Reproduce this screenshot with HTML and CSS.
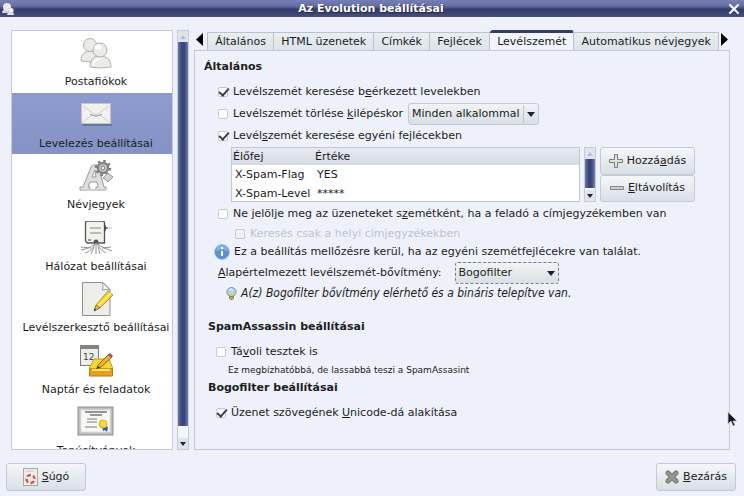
FILE: index.html
```html
<!DOCTYPE html>
<html lang="hu">
<head>
<meta charset="utf-8">
<title>Az Evolution beállításai</title>
<link rel="stylesheet" href="styles.css">
</head>
<body>
<div class="window">
  <header class="titlebar">
    <svg class="app-icon" width="13" height="13" viewBox="0 0 13 13"><path d="M1 11c0-3 2-4 4-4s5 1 5 4z" fill="#cfd2d6"/><circle cx="6" cy="5" r="4" fill="#e9e9ea"/><path d="M6 13c0-2 2-3 4-3s3 1 3 3z" fill="#dfe1e4"/><circle cx="10" cy="8.500" r="2.500" fill="#f3f3f3" stroke="#b9bbc2" stroke-width=".5"/></svg>
    <h1>Az Evolution beállításai</h1>
    <button class="close" aria-label="Ablak bezárása"><svg width="12" height="12" viewBox="0 0 12 12"><path d="M2 2l8 8M10 2l-8 8" stroke="#fff" stroke-width="2" stroke-linecap="round"/></svg></button>
  </header>

  <main class="content">
    <nav class="sidebar">
      <div class="list">
        <div class="items">
          <a href="#" class="item">
            <svg width="34" height="34" viewBox="0 0 34 34"><g fill="#ecebe8" stroke="#b2b0ac"><path d="M2 25c0-7 4-10 9-10s8 3 8 10q-8 2-17 0z"/><circle cx="11" cy="9" r="6.500"/><path d="M11 31c0-8 4-11 10-11s11 3 11 11q-10 2-21 0z"/><circle cx="21" cy="14" r="7"/></g><ellipse cx="19" cy="11" rx="3.500" ry="2.500" fill="#fff"/><path d="M14 29c1-4 3-6 7-6" stroke="#fff" stroke-width="2" fill="none"/></svg>
            <span>Postafiókok</span></a>
          <a href="#" class="item selected">
            <svg width="34" height="34" viewBox="0 0 34 34"><path d="M3 27h30" stroke="#6c779f" stroke-width="2"/><rect x="2.500" y="5.500" width="29" height="20" fill="#f1f1ef" stroke="#c2c3c4"/><path d="M3 25l10-8M31 25l-10-8" stroke="#cfcfcc" fill="none"/><path d="M4 8l11 8q2 1.500 4 0l11-8" stroke="#cbccc9" fill="none"/><path d="M11 16q6 4 12 0" stroke="#999b98" fill="none"/></svg>
            <span>Levelezés beállításai</span></a>
          <a href="#" class="item">
            <svg width="34" height="34" viewBox="0 0 34 34"><path d="M1 28h3l8-20q1-2 3-2h4l6 22h2v3H17v-3h2l-1-5h-7l-2 5h2v3H1zM13 18h4l-1-7z" fill="#dedede" stroke="#9a9a9a" fill-rule="evenodd"/><path d="M2 31h25" stroke="#ccc" stroke-width="2"/><circle cx="24" cy="9" r="5" fill="#d2d2d2" stroke="#858585" stroke-width="2.500"/><circle cx="24" cy="9" r="7" fill="none" stroke="#808080" stroke-width="2.500" stroke-dasharray="2.500 3"/><circle cx="24" cy="9" r="2" fill="#eee" stroke="#777"/><path d="M29 14l5 4-5 5-5-4z" fill="#d0d0d0" stroke="#9a9a9a"/></svg>
            <span>Névjegyek</span></a>
          <a href="#" class="item">
            <svg width="34" height="34" viewBox="0 0 34 34"><path d="M6.500 2q0-2 2-2h15q2 0 2 2v20h-17l-2-2z" fill="#f1f2ec" stroke="#555" stroke-width="1.300"/><path d="M11 7h11M11 12h11" stroke="#aaa" stroke-width="1.500"/><path d="M9 19h3" stroke="#999" stroke-width="2"/><path d="M26 4v6M26 7h3" stroke="#444" stroke-width="1.500"/><path d="M28 7h5" stroke="#b8c6cf"/><circle cx="17" cy="21" r="2.500" fill="#555"/><path d="M17 22q-5 5-15 7M17 22q6 5 16 8M16 23q-3 7-10 9M18 23q3 6 9 9M17 23v10M12 27l-10-1M23 27l9-1M15 26l-3 7M19 26l2 7" stroke="#959595" stroke-width="1" fill="none"/></svg>
            <span>Hálózat beállításai</span></a>
          <a href="#" class="item">
            <svg width="34" height="34" viewBox="0 0 34 34"><path d="M3.500.5H24l7 7v26H3.500z" fill="#ededec" stroke="#8e908e"/><path d="M23.500.5q1 5 0 7.500 3-1 7.500 0z" fill="#fafafa" stroke="#999"/><path d="M17 23L29 9l5 4-13 13z" fill="#f1ce28" stroke="#c29a22"/><path d="M19 24L32 11" stroke="#ffec73" stroke-width="2"/><path d="M17 23l4 3-6 3z" fill="#dfb878" stroke="#8b733b"/><path d="M15 29l2-1-1-2z" fill="#333"/></svg>
            <span>Levélszerkesztő beállításai</span></a>
          <a href="#" class="item">
            <svg width="34" height="34" viewBox="0 0 34 34"><rect x="1.500" y="1.500" width="18" height="20" fill="#eeefed" stroke="#797c78"/><path d="M1 1h19v4H1z" fill="#81857e"/><text x="4" y="16" class="day">12</text><path d="M15 15h15l4 10H10z" fill="#f8d92b" stroke="#ca951c"/><path d="M10.500 25h23v7h-23z" fill="#e3a21d" stroke="#b77817"/><path d="M13 26h18" stroke="#ffe45e" stroke-width="2"/><path d="M19 21l11-11 3 3-11 10-4 1z" fill="#f2ad31" stroke="#80662c"/><path d="M29 11l2-2 3 3-2 2z" fill="#bb494e"/><path d="M17 25l2-3 2 2z" fill="#333"/></svg>
            <span>Naptár és feladatok</span></a>
          <a href="#" class="item">
            <svg width="38" height="34" viewBox="0 0 38 34"><rect x="1" y="2" width="35" height="28" fill="#bdbfbc" stroke="#8b8e8b"/><rect x="4" y="5" width="29" height="22" fill="#f8f8f7" stroke="#e0e0e0"/><path d="M8 7h22M13 10h12" stroke="#777" stroke-width="1.500"/><path d="M10 14h10M10 17h10M8 22h12" stroke="#a3a3a3" stroke-width="1.500"/><path d="M25 21l1 5 2-1 2 2 1-5z" fill="#35599d"/><circle cx="26" cy="19" r="4" fill="#f4dc32" stroke="#d6ad2b"/></svg>
            <span>Tanúsítványok</span></a>
        </div>
      </div>
      <div class="scroll" aria-hidden="true"><i class="up"></i><b></b><i class="down"></i></div>
    </nav>

    <section class="notebook">
      <div class="tabs" role="tablist">
        <button class="arrow" aria-label="Előző lapok"><svg width="7" height="13" viewBox="0 0 7 13"><path d="M7 0v13L0 6.500z"/></svg></button>
        <button class="tab" role="tab">Általános</button>
        <button class="tab" role="tab">HTML üzenetek</button>
        <button class="tab" role="tab">Címkék</button>
        <button class="tab" role="tab">Fejlécek</button>
        <button class="tab active" role="tab" aria-selected="true">Levélszemét</button>
        <button class="tab" role="tab">Automatikus névjegyek</button>
        <button class="arrow" aria-label="További lapok"><svg width="7" height="13" viewBox="0 0 7 13"><path d="M0 0v13L7 6.500z"/></svg></button>
      </div>
      <form class="panel">
        <h2>Általános</h2>
        <div class="group">
          <label class="row"><input type="checkbox" checked><span>Levélszemét keresése b<u>e</u>érkezett levelekben</span></label>
          <div class="row">
            <input type="checkbox" id="purge"><label for="purge">Levélszemét törlése <u>k</u>ilépéskor</label>
            <span class="combo split"><select aria-label="Törlés gyakorisága"><option>Minden alkalommal</option></select></span>
          </div>
          <label class="row"><input type="checkbox" checked><span>Levél<u>s</u>zemét keresése egyéni fejlécekben</span></label>
          <div class="headers">
            <div class="frame">
              <table>
                <thead><tr><th>Élőfej</th><th>Értéke</th></tr></thead>
                <tbody><tr><td>X-Spam-Flag</td><td>YES</td></tr><tr><td>X-Spam-Level</td><td>*****</td></tr></tbody>
              </table>
            </div>
            <div class="scroll" aria-hidden="true"><i class="up"></i><b></b><i class="down"></i></div>
            <div class="actions">
              <button type="button"><svg width="14" height="14" viewBox="0 0 14 14"><path d="M5.500.5h3v5h5v3h-5v5h-3v-5h-5v-3h5z" fill="#e1e3e1" stroke="#777b77"/></svg><span>Hozzá<u>a</u>dás</span></button>
              <button type="button"><svg width="14" height="14" viewBox="0 0 14 14"><path d="M.5 5.500h13v3H.5z" fill="#c9ccca" stroke="#868a87"/></svg><span><u>E</u>ltávolítás</span></button>
            </div>
          </div>
          <label class="row"><input type="checkbox"><span>Ne jelölje meg az üzeneteket s<u>z</u>emétként, ha a feladó a címjegyzékemben van</span></label>
          <label class="row short sub"><input type="checkbox" disabled><span>Keresés csak a helyi címjegyzékekben</span></label>
        </div>
        <p class="row short info"><svg width="16" height="16" viewBox="0 0 16 16"><circle cx="8" cy="8" r="7.500" fill="#5c91d1" stroke="#a9c5e7"/><path d="M2 7a6 6 0 0 1 12 0q-6-2-12 0z" fill="#85afe0"/><path d="M8 7v5M8 3v2" stroke="#fff" stroke-width="2"/></svg><span>Ez a beállítás mellőzésre kerül, ha az egyéni szemétfejlécekre van találat.</span></p>
        <div class="row plugin"><label for="plugin"><u>A</u>lapértelmezett levélszemét-bővítmény:</label><span class="combo focus"><select id="plugin"><option>Bogofilter</option></select></span></div>
        <p class="row short hint"><svg width="11" height="13" viewBox="0 0 11 13"><path d="M3 9Q0 6 1 3.500 2.500.5 5.500.5T10 3.500Q11 6 8 9z" fill="#b8d0df" stroke="#7c97a9"/><path d="M3 3q2-2 4 0" stroke="#fff" fill="none"/><path d="M4 6l1.500 2L7 6v3H4z" fill="#ebcf4c"/><path d="M3.500 9.500h4v2l-1 1h-2l-1-1z" fill="#c6aa45" stroke="#8b8156"/></svg><em>A(z) Bogofilter bővítmény elérhető és a bináris telepítve van.</em></p>
        <h2 class="plugin-title spaced">SpamAssassin beállításai</h2>
        <div class="plugin-group">
          <label class="row"><input type="checkbox"><span>Tá<u>v</u>oli tesztek is</span></label>
          <p class="note">Ez megbízhatóbbá, de lassabbá teszi a SpamAssasint</p>
        </div>
        <h2 class="plugin-title">Bogofilter beállításai</h2>
        <div class="plugin-group">
          <label class="row"><input type="checkbox" checked><span>Üzenet szövegének <u>U</u>nicode-dá alakítása</span></label>
        </div>
      </form>
    </section>
  </main>

  <footer class="footer">
    <button type="button"><svg width="15" height="18" viewBox="0 0 15 18"><rect x=".5" y=".5" width="14" height="17" fill="#f0eeeb" stroke="#aaa7a3"/><path d="M3 3h8" stroke="#c9c9c9"/><circle cx="7.500" cy="11" r="4" fill="none" stroke="#c85d5d" stroke-width="2.500"/><circle cx="7.500" cy="11" r="4" fill="none" stroke="#fff" stroke-width="2.500" stroke-dasharray="2 4.300"/></svg><span><u>S</u>úgó</span></button>
    <button type="button"><svg width="14" height="14" viewBox="0 0 14 14"><path d="M3 3l8 8M11 3l-8 8" stroke="#777870" stroke-width="5" stroke-linecap="round"/><path d="M3 3l8 8M11 3l-8 8" stroke="#96978e" stroke-width="3" stroke-linecap="round"/></svg><span><u>B</u>ezárás</span></button>
  </footer>
  <svg class="pointer" width="11" height="16" viewBox="0 0 11 16"><path d="M1 1v12l3-3 2 5 2-1-2-4h4z" fill="#17171d" stroke="#c6c9d2" stroke-width=".8"/></svg>
</div>
</body>
</html>
```

FILE: styles.css
```css
* { box-sizing: border-box; }
body {
  margin: 0;
  font: 11px/16px "DejaVu Sans", sans-serif;
  color: #1b1d23;
  background: #eef1fa;
}
h1, h2, p { margin: 0; }
button, select, input { margin: 0; font: inherit; color: inherit; }
svg { flex: none; }
u { text-underline-offset: 1px; }
.window {
  position: relative;
  display: flex;
  flex-direction: column;
  min-height: 100vh;
}
.titlebar {
  display: flex;
  align-items: center;
  justify-content: space-between;
  height: 17px;
  padding: 0 4px 0 1px;
  background: linear-gradient(#767fb5, #666fa3 35%, #343c69 55%, #464e7b);
}
.titlebar h1 {
  font-size: 11px;
  line-height: 16px;
  color: #fff;
  text-shadow: 1px 1px 1px #20264c;
}
.close {
  display: flex;
  padding: 0;
  border: 0;
  background: none;
}
.content {
  display: flex;
  flex: 1;
  gap: 5px;
  padding: 13px 14px 0 11px;
}
.sidebar { display: flex; gap: 4px; }
.list {
  width: 162px;
  height: 420px;
  overflow: hidden;
  border: 1px solid #c4cad6;
  background: #fff;
}
.items {
  display: grid;
  grid-auto-rows: 1fr;
  height: 103%;
}
.item {
  display: flex;
  flex-direction: column;
  align-items: center;
  gap: 4px;
  padding: 5px 0 0 8px;
  color: inherit;
  text-decoration: none;
  white-space: nowrap;
}
.selected { background: linear-gradient(#8d9bcf, #8492c5); }
.day { font-size: 9px; fill: #444; }

.scroll {
  display: flex;
  flex-direction: column;
  width: 12px;
  border: 1px solid #c5ccd7;
  background: #f4f6fb;
}
.scroll b {
  flex: 1;
  background: linear-gradient(90deg, #6b76a6, #35417a 40%, #3e4a83 70%, #7883ad);
}
.scroll i {
  display: flex;
  align-items: center;
  justify-content: center;
  height: 11px;
  background: #dfe5ec;
}
.scroll i::before {
  content: "";
  border: 3px solid transparent;
}
.scroll .up::before { border-top-width: 0; border-bottom: 4px solid #b8bfca; }
.scroll .down::before { border-bottom-width: 0; border-top: 4px solid #20232c; }
.sidebar .scroll b { margin-bottom: 12px; }

.notebook {
  display: flex;
  flex: 1;
  flex-direction: column;
  min-width: 0;
}
.tabs {
  display: flex;
  align-items: flex-end;
  height: 20px;
}
.arrow {
  display: flex;
  align-items: center;
  height: 20px;
  padding: 0 2px 2px;
  border: 0;
  background: none;
}
.arrow:first-child { margin-right: 2px; }
.tab {
  flex: 1 1 auto;
  height: 18px;
  padding: 0;
  border: 1px solid #bac3cd;
  border-bottom: 0;
  background: linear-gradient(#e9eef1, #dce4e8);
  line-height: 14px;
  white-space: nowrap;
}
.tab + .tab { border-left-width: 0; }
.tab.active {
  height: 21px;
  margin-bottom: -1px;
  border-top: 3px solid #333c6a;
  border-radius: 3px 3px 0 0;
  background: #f1f4fc;
}
.panel {
  flex: 1;
  padding: 5px 9px 0;
  border: 1px solid #c3cad7;
}
.panel h2 {
  font-size: 11px;
  line-height: 22px;
  margin-bottom: 3px;
}
.row {
  display: flex;
  align-items: center;
  gap: 5px;
  min-height: 22px;
  white-space: nowrap;
}
.short { min-height: 18px; }
.group { padding-left: 14px; }
input[type="checkbox"] {
  appearance: none;
  flex: none;
  display: grid;
  place-items: center;
  width: 10px;
  height: 10px;
  border: 1px solid #c3c9d3;
  border-radius: 2px;
  background: #fff;
}
input:checked::before {
  content: "";
  width: 8px;
  height: 4px;
  border: solid #373e5a;
  border-width: 0 0 2px 2px;
  transform: translateY(-1px) rotate(-48deg);
}
input:disabled { background: #f0f3fa; }
.combo { position: relative; display: flex; }
.combo select {
  appearance: none;
  height: 22px;
  padding: 0 18px 0 3px;
  border: 1px solid #c3cad2;
  border-radius: 3px;
  background: linear-gradient(#f1f4f7, #d9dfe4);
}
.combo::after {
  content: "";
  position: absolute;
  top: 9px;
  right: 4px;
  border: 4px solid transparent;
  border-top: 5px solid #20232b;
  border-bottom: 0;
}
.split::before {
  content: "";
  position: absolute;
  top: 2px;
  right: 15px;
  height: 18px;
  border-left: 1px solid #bdc5ce;
}
.focus select { width: 104px; border: 1px dashed #777e88; }
.headers {
  display: flex;
  gap: 4px;
  height: 55px;
  margin: 0 0 1px 13px;
}
.frame {
  flex: 0 1 349px;
  overflow: hidden;
  border: 1px solid #c2c8d2;
  background: #fff;
}
table { width: 100%; border-collapse: collapse; }
th {
  height: 17px;
  padding: 0 1px;
  background: linear-gradient(#e7ebf0, #d5dbe3);
  font-weight: 400;
  text-align: left;
}
th:first-child { width: 82px; }
td { height: 19px; padding: 0 3px; white-space: nowrap; }
.headers .scroll b { margin-bottom: 2px; }
.actions { display: flex; flex-direction: column; width: 95px; }
.actions button { flex: 1; }
.actions button, .footer button {
  display: flex;
  align-items: center;
  justify-content: center;
  gap: 4px;
  padding: 0;
  border: 1px solid #c3cad2;
  border-radius: 3px;
  background: linear-gradient(#f4f6fa, #d9e0e5);
}
.sub { padding-left: 17px; color: #bcc3d1; }
.info { gap: 4px; padding-left: 10px; }
.plugin { gap: 13px; padding-left: 14px; margin-top: 1px; }
.hint {
  gap: 4px;
  padding-left: 22px;
  font-family: "DejaVu Sans Condensed", "DejaVu Sans", sans-serif;
  font-size: 12px;
}
.plugin-title { padding-left: 4px; }
.spaced { margin-top: 14px; }
.plugin-group { padding-left: 12px; }
.note { padding-left: 12px; font-size: 9px; line-height: 14px; }
.footer {
  display: flex;
  justify-content: space-between;
  padding: 13px 8px 5px 6px;
}
.footer button { width: 80px; height: 28px; }
.pointer {
  position: absolute;
  right: 6px;
  bottom: 69px;
}
```
